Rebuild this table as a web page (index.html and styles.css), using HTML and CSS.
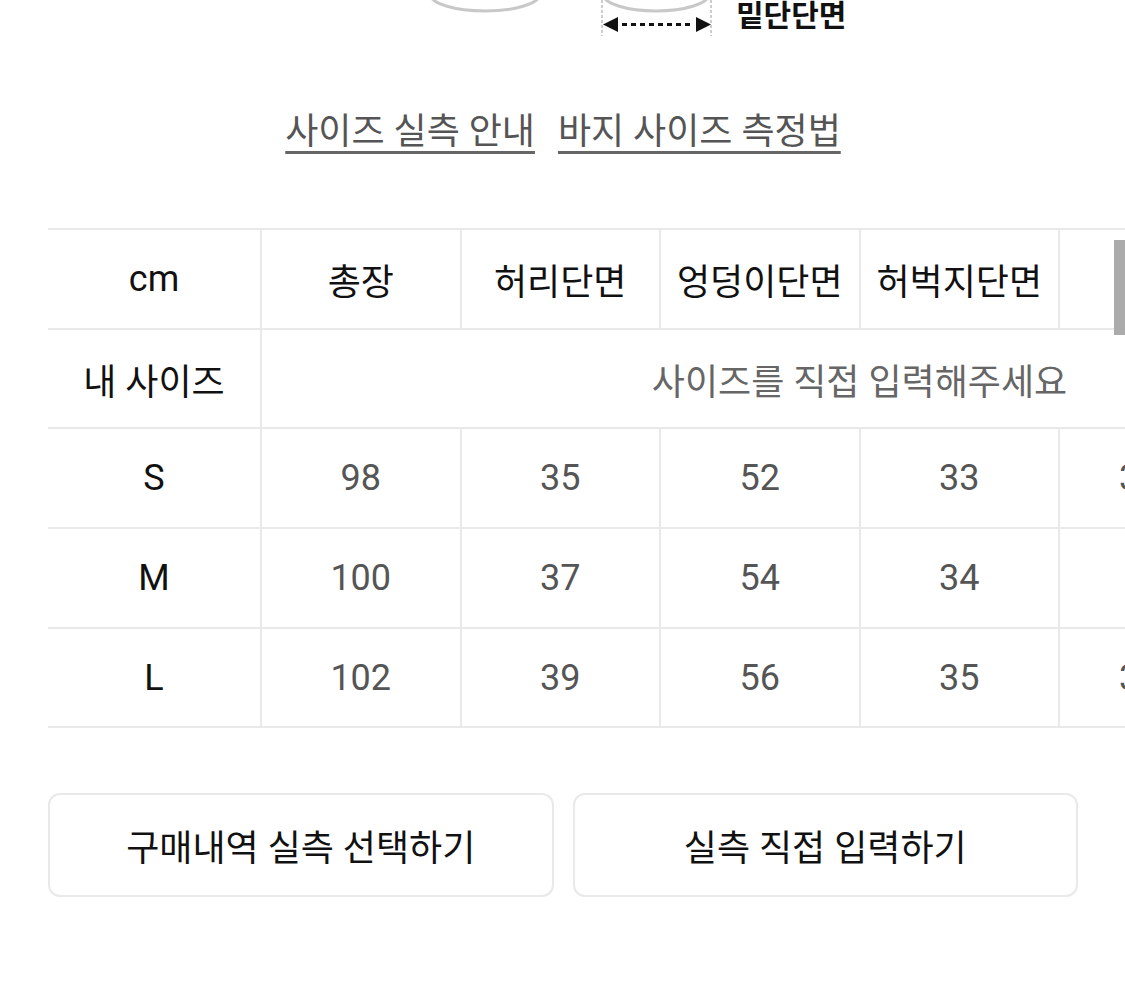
FILE: index.html
```html
<!DOCTYPE html>
<html lang="ko">
<head>
<meta charset="utf-8">
<title>사이즈 정보</title>
<link rel="stylesheet" href="styles.css">
</head>
<body>
<div class="page">
  <div class="figure">
    <svg class="figure-svg" width="1125" height="36" viewBox="0 0 1125 36" xmlns="http://www.w3.org/2000/svg">
      <path d="M430 -6 A55 17 0 0 0 540 -6" fill="none" stroke="#c8c8c8" stroke-width="3"/>
      <path d="M603 -6 A53 17 0 0 0 709 -6" fill="none" stroke="#c8c8c8" stroke-width="3"/>
      <line x1="602" y1="0" x2="602" y2="36" stroke="#bdbdbd" stroke-width="1.5" stroke-dasharray="3 2"/>
      <line x1="711" y1="0" x2="711" y2="36" stroke="#bdbdbd" stroke-width="1.5" stroke-dasharray="3 2"/>
      <polygon points="603,24.5 618,17 618,32" fill="#111"/>
      <polygon points="711,24.5 696,17 696,32" fill="#111"/>
      <line x1="622" y1="24.5" x2="694" y2="24.5" stroke="#111" stroke-width="3" stroke-dasharray="5 4"/>
      <text x="736" y="26" class="figure-label">밑단단면</text>
    </svg>
  </div>

  <nav class="guides">
    <a class="guide-link" href="#">사이즈 실측 안내</a>
    <a class="guide-link" href="#">바지 사이즈 측정법</a>
  </nav>

  <div class="table-wrap">
    <div class="size-grid">
      <div class="cell head first">cm</div>
      <div class="cell head">총장</div>
      <div class="cell head">허리단면</div>
      <div class="cell head">엉덩이단면</div>
      <div class="cell head">허벅지단면</div>
      <div class="cell head">밑위</div>
      <div class="cell head">밑단단면</div>

      <div class="cell head first">내 사이즈</div>
      <div class="cell placeholder span-all">사이즈를 직접 입력해주세요</div>

      <div class="cell head first">S</div>
      <div class="cell val">98</div>
      <div class="cell val">35</div>
      <div class="cell val">52</div>
      <div class="cell val">33</div>
      <div class="cell val">30.5</div>
      <div class="cell val">21</div>

      <div class="cell head first">M</div>
      <div class="cell val">100</div>
      <div class="cell val">37</div>
      <div class="cell val">54</div>
      <div class="cell val">34</div>
      <div class="cell val">31</div>
      <div class="cell val">22</div>

      <div class="cell head first">L</div>
      <div class="cell val">102</div>
      <div class="cell val">39</div>
      <div class="cell val">56</div>
      <div class="cell val">35</div>
      <div class="cell val">31.5</div>
      <div class="cell val">23</div>
    </div>
    <div class="scroll-thumb"></div>
  </div>

  <div class="actions">
    <button class="action-btn" type="button">구매내역 실측 선택하기</button>
    <button class="action-btn" type="button">실측 직접 입력하기</button>
  </div>
</div>
</body>
</html>
```

FILE: styles.css
```css
* {
  box-sizing: border-box;
}

html, body {
  margin: 0;
  padding: 0;
  background: #fff;
}

body {
  font-family: Roboto, "Noto Sans CJK KR", sans-serif;
  color: #111;
  width: 1125px;
  overflow: hidden;
}

.page {
  width: 1125px;
  padding: 0 47px 0 48px;
}

.figure {
  margin: 0 -47px 0 -48px;
  height: 36px;
}

.figure-svg {
  display: block;
}

.figure-label {
  font-family: "Noto Sans CJK KR", sans-serif;
  font-weight: 700;
  font-size: 30px;
  fill: #111;
}

.guides {
  display: flex;
  justify-content: center;
  gap: 23px;
  margin-top: 76px;
  font-size: 36px;
  line-height: 40px;
}

.guide-link {
  color: #555;
  text-decoration: underline;
  text-decoration-thickness: 3px;
  text-underline-offset: 7px;
  text-decoration-color: #666;
}

.table-wrap {
  position: relative;
  margin-top: 76px;
  margin-right: -47px;
  overflow: hidden;
}

.size-grid {
  display: grid;
  grid-template-columns: 212px repeat(4, 199.5px) 190px 209px;
  grid-auto-rows: 99.7px;
  width: max-content;
  border-top: 2px solid #e9e9e9;
  font-size: 36px;
}

.cell {
  display: flex;
  align-items: center;
  justify-content: center;
  border-bottom: 2px solid #e9e9e9;
  border-left: 2px solid #e9e9e9;
  white-space: nowrap;
}

.cell.first {
  border-left: 0;
}

.head {
  color: #111;
}

.val {
  color: #555;
}

.placeholder {
  color: #666;
}

.span-all {
  grid-column: 2 / span 6;
}

.scroll-thumb {
  position: absolute;
  top: 12px;
  right: 0;
  width: 11px;
  height: 95px;
  background: #ababab;
}

.actions {
  display: flex;
  gap: 19px;
  margin-top: 65px;
}

.action-btn {
  flex: 1;
  height: 104px;
  border: 2px solid #e9e9e9;
  border-radius: 12px;
  background: #fff;
  font-family: Roboto, "Noto Sans CJK KR", sans-serif;
  font-size: 36px;
  color: #111;
  padding: 0;
}
```
